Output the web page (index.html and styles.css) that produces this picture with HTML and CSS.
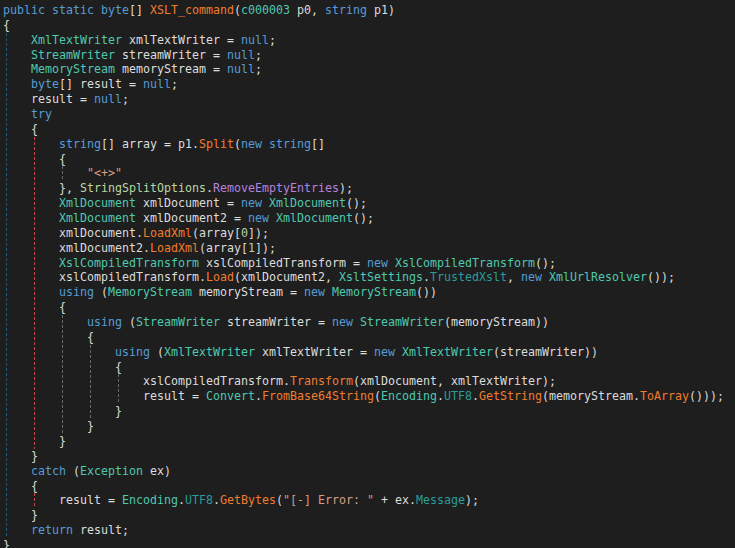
FILE: index.html
```html
<!DOCTYPE html>
<html>
<head>
<meta charset="utf-8">
<link rel="stylesheet" href="styles.css">
</head>
<body>
<div class="code">
<div class="ln"><span class="k">public</span> <span class="k">static</span> <span class="k">byte</span>[] <span class="m">XSLT_command</span>(<span class="t">c000003</span> p0, <span class="k">string</span> p1)</div>
<div class="ln">{</div>
<div class="blk g-blue">
<div class="ln"><span class="t">XmlTextWriter</span> xmlTextWriter = <span class="k">null</span>;</div>
<div class="ln"><span class="t">StreamWriter</span> streamWriter = <span class="k">null</span>;</div>
<div class="ln"><span class="t">MemoryStream</span> memoryStream = <span class="k">null</span>;</div>
<div class="ln"><span class="k">byte</span>[] result = <span class="k">null</span>;</div>
<div class="ln">result = <span class="k">null</span>;</div>
<div class="ln"><span class="k">try</span></div>
<div class="ln">{</div>
<div class="blk g-red">
<div class="ln"><span class="k">string</span>[] array = p1.<span class="m">Split</span>(<span class="k">new</span> <span class="k">string</span>[]</div>
<div class="ln">{</div>
<div class="blk g-gray">
<div class="ln"><span class="s">"&lt;+&gt;"</span></div>
</div>
<div class="ln">}, <span class="e">StringSplitOptions</span>.<span class="ef">RemoveEmptyEntries</span>);</div>
<div class="ln"><span class="t">XmlDocument</span> xmlDocument = <span class="k">new</span> <span class="t">XmlDocument</span>();</div>
<div class="ln"><span class="t">XmlDocument</span> xmlDocument2 = <span class="k">new</span> <span class="t">XmlDocument</span>();</div>
<div class="ln">xmlDocument.<span class="m">LoadXml</span>(array[<span class="n">0</span>]);</div>
<div class="ln">xmlDocument2.<span class="m">LoadXml</span>(array[<span class="n">1</span>]);</div>
<div class="ln"><span class="t">XslCompiledTransform</span> xslCompiledTransform = <span class="k">new</span> <span class="t">XslCompiledTransform</span>();</div>
<div class="ln">xslCompiledTransform.<span class="m">Load</span>(xmlDocument2, <span class="t">XsltSettings</span>.<span class="sp">TrustedXslt</span>, <span class="k">new</span> <span class="t">XmlUrlResolver</span>());</div>
<div class="ln"><span class="k">using</span> (<span class="t">MemoryStream</span> memoryStream = <span class="k">new</span> <span class="t">MemoryStream</span>())</div>
<div class="ln">{</div>
<div class="blk g-gray">
<div class="ln"><span class="k">using</span> (<span class="t">StreamWriter</span> streamWriter = <span class="k">new</span> <span class="t">StreamWriter</span>(memoryStream))</div>
<div class="ln">{</div>
<div class="blk g-gray">
<div class="ln"><span class="k">using</span> (<span class="t">XmlTextWriter</span> xmlTextWriter = <span class="k">new</span> <span class="t">XmlTextWriter</span>(streamWriter))</div>
<div class="ln">{</div>
<div class="blk g-gray">
<div class="ln">xslCompiledTransform.<span class="m">Transform</span>(xmlDocument, xmlTextWriter);</div>
<div class="ln">result = <span class="t">Convert</span>.<span class="m">FromBase64String</span>(<span class="t">Encoding</span>.<span class="sp">UTF8</span>.<span class="m">GetString</span>(memoryStream.<span class="m">ToArray</span>()));</div>
</div>
<div class="ln">}</div>
</div>
<div class="ln">}</div>
</div>
<div class="ln">}</div>
</div>
<div class="ln">}</div>
<div class="ln"><span class="k">catch</span> (<span class="t">Exception</span> ex)</div>
<div class="ln">{</div>
<div class="blk g-red">
<div class="ln">result = <span class="t">Encoding</span>.<span class="sp">UTF8</span>.<span class="m">GetBytes</span>(<span class="s">"[-] Error: "</span> + ex.<span class="sp">Message</span>);</div>
</div>
<div class="ln">}</div>
<div class="ln"><span class="k">return</span> result;</div>
</div>
<div class="ln">}</div>
</div>
</body>
</html>
```

FILE: styles.css
```css
html, body {
  margin: 0;
  padding: 0;
  background: #1e1e1e;
  overflow: hidden;
}

.code {
  padding: 3px 0 0 3px;
  font-family: "DejaVu Sans Mono", "Liberation Mono", monospace;
  font-size: 11.63px;
  line-height: 14.86px;
  color: #dcdcdc;
}

.ln {
  white-space: pre;
  height: 14.86px;
}

.blk {
  padding-left: 28px;
  background-repeat: no-repeat;
  background-position: 3px 0;
  background-size: 1px 100%;
}

.g-blue {
  background-image: repeating-linear-gradient(to bottom, #1f5a78 0 3px, transparent 3px 5px);
}

.g-red {
  background-image: repeating-linear-gradient(to bottom, #c94444 0 3px, transparent 3px 5px);
}

.g-gray {
  background-image: repeating-linear-gradient(to bottom, #6a6a6a 0 3px, transparent 3px 5px);
}

.k { color: #569cd6; }
.t { color: #4ec9b0; }
.m { color: #f07c2e; }
.s { color: #d69d85; }
.n { color: #b5cea8; }
.e { color: #b8d7a3; }
.ef { color: #b483df; }
.sp { color: #2b9c9a; }
```
